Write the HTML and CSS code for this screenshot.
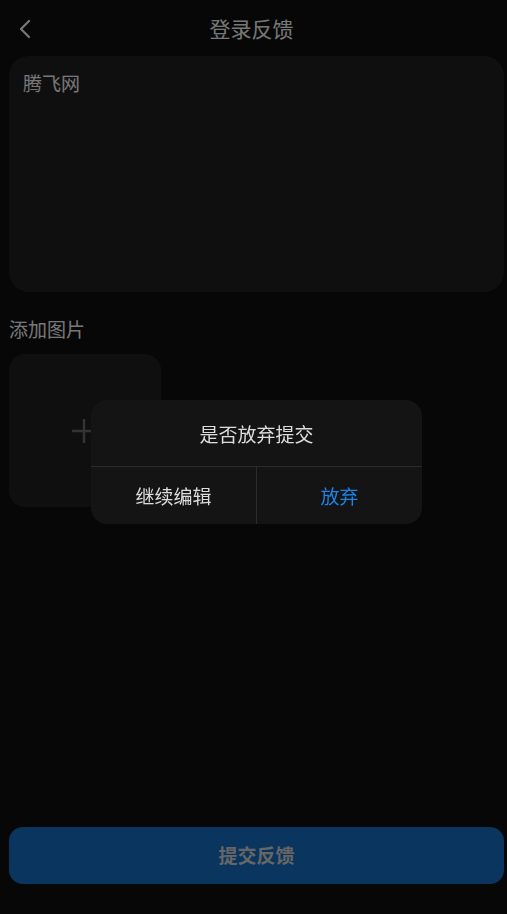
FILE: index.html
```html
<!DOCTYPE html>
<html lang="zh-CN">
<head>
    <meta charset="UTF-8">
    <meta name="viewport" content="width=device-width, initial-scale=1.0">
    <title>登录反馈</title>
    <link rel="stylesheet" href="styles.css">
</head>
<body>
    <div class="header">
        <span class="back">
            <svg width="14" height="20" viewBox="0 0 14 20"><path d="M11 2 L3 10 L11 18" fill="none" stroke="#eeeeee" stroke-width="2.2" stroke-linecap="round" stroke-linejoin="round"/></svg>
        </span>
        <h1>登录反馈</h1>
    </div>
    <div class="page">
        <div class="textarea">腾飞网</div>
        <div class="section-title">添加图片</div>
        <div class="upload">
            <svg width="26" height="26" viewBox="0 0 26 26"><path d="M13 1 V25 M1 13 H25" stroke="#666666" stroke-width="2.4"/></svg>
        </div>
    </div>
    <div class="footer">
        <button type="button" class="btn-submit">提交反馈</button>
    </div>

    <div class="mask">
        <div class="dialog">
            <div class="dialog-title">是否放弃提交</div>
            <div class="dialog-actions">
                <button type="button" class="btn-cancel">继续编辑</button>
                <button type="button" class="btn-confirm">放弃</button>
            </div>
        </div>
    </div>
</body>
</html>
```

FILE: styles.css
```css
body {
    font-family: "Noto Sans CJK SC", "Noto Sans", sans-serif;
    background-color: #0e0e0e;
    color: #eeeeee;
    margin: 0;
    height: 914px;
    overflow: hidden;
}
.header {
    height: 56px;
    display: flex;
    align-items: center;
    justify-content: center;
    position: relative;
    padding-right: 4px;
}
.header h1 {
    margin: 0;
    font-size: 21px;
    font-weight: normal;
    color: #eeeeee;
}
.back {
    position: absolute;
    left: 18px;
    top: 19px;
    display: flex;
}
.page {
    padding: 0 3px 0 9px;
}
.textarea {
    height: 236px;
    box-sizing: border-box;
    padding: 13px 14px;
    background-color: #1e1e1e;
    border-radius: 20px;
    font-size: 19px;
    line-height: 27px;
    color: #eeeeee;
}
.section-title {
    margin-top: 24px;
    font-size: 19px;
    line-height: 26px;
    color: #eeeeee;
}
.upload {
    margin-top: 12px;
    width: 152px;
    height: 153px;
    background-color: #1e1e1e;
    border-radius: 16px;
    display: flex;
    align-items: center;
    justify-content: center;
    padding-right: 2px;
    box-sizing: border-box;
}
.footer {
    position: fixed;
    left: 9px;
    right: 3px;
    bottom: 30px;
}
.btn-submit {
    width: 100%;
    height: 57px;
    border: none;
    border-radius: 14px;
    background-color: #146abe;
    color: #cccccc;
    font-family: inherit;
    font-size: 19px;
    font-weight: bold;
    padding: 0 0 2px;
}
.mask {
    position: fixed;
    inset: 0;
    background-color: rgba(0, 0, 0, 0.5);
    display: flex;
    align-items: center;
    justify-content: center;
    padding: 10px 0 0 6px;
    box-sizing: border-box;
}
.dialog {
    width: 331px;
    background-color: #141414;
    border-radius: 16px;
    overflow: hidden;
}
.dialog-title {
    height: 66px;
    display: flex;
    align-items: center;
    justify-content: center;
    font-size: 19px;
    color: #dddddd;
    border-bottom: 1px solid #2b2b2b;
}
.dialog-actions {
    display: flex;
    height: 57px;
}
.dialog-actions button {
    flex: 1;
    border: none;
    background: none;
    font-family: inherit;
    font-size: 19px;
    color: #dddddd;
}
.dialog-actions .btn-cancel {
    border-right: 1px solid #2b2b2b;
}
.dialog-actions .btn-confirm {
    color: #1a84e8;
}
```
